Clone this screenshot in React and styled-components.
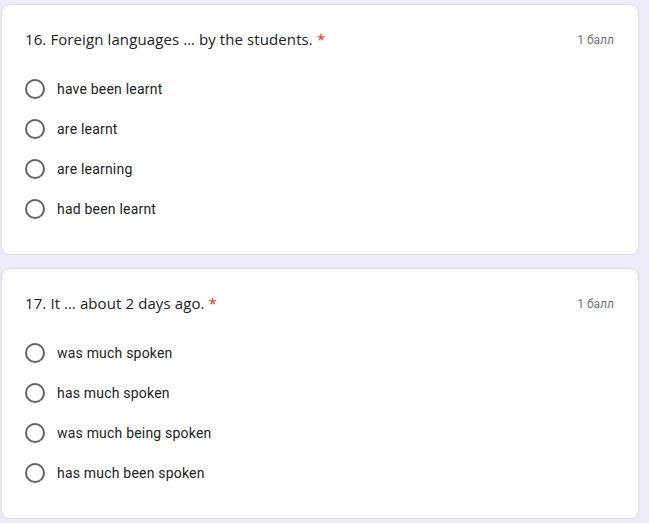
import React from "react";
import styled, { createGlobalStyle } from "styled-components";

const Global = createGlobalStyle`
  html, body { margin: 0; padding: 0; }
  body {
    background: #f0ebf8;
    font-family: Roboto, "Liberation Sans", Arial, sans-serif;
    color: #202124;
  }
`;

const Page = styled.div`
  display: flex;
  flex-direction: column;
  gap: 13px;
  padding: 4px 10px 4px 1px;
  width: 638px;
`;

const Card = styled.div`
  background: #fff;
  border: 1px solid #dadce0;
  border-radius: 8px;
  padding: 22px 24px 25px 23px;
`;

const Header = styled.div`
  display: flex;
  justify-content: space-between;
  align-items: center;
  height: 24px;
  margin-bottom: 18px;
`;

const Title = styled.div`
  font-family: "Open Sans", Roboto, sans-serif;
  font-size: 15px;
  letter-spacing: 0.1px;
  color: #202124;
`;

const Star = styled.span`
  color: #d93025;
  margin-left: 4px;
`;

const Points = styled.div`
  font-size: 12px;
  color: #70757a;
  margin-top: 2px;
`;

const Options = styled.div`
  display: flex;
  flex-direction: column;
`;

const Option = styled.label`
  display: flex;
  align-items: center;
  height: 40px;
  gap: 12px;
  font-size: 14px;
  letter-spacing: 0.2px;
  color: #202124;
`;

const Radio = styled.span`
  width: 16px;
  height: 16px;
  border: 2px solid #5f6368;
  border-radius: 50%;
  flex: none;
`;

const questions = [
  {
    title: "16. Foreign languages … by the students.",
    options: ["have been learnt", "are learnt", "are learning", "had been learnt"],
  },
  {
    title: "17. It … about 2 days ago.",
    options: ["was much spoken", "has much spoken", "was much being spoken", "has much been spoken"],
  },
];

export default function App() {
  return (
    <>
      <Global />
      <Page>
        {questions.map((q) => (
          <Card key={q.title}>
            <Header>
              <Title>
                {q.title}
                <Star>*</Star>
              </Title>
              <Points>1 балл</Points>
            </Header>
            <Options>
              {q.options.map((o) => (
                <Option key={o}>
                  <Radio />
                  {o}
                </Option>
              ))}
            </Options>
          </Card>
        ))}
      </Page>
    </>
  );
}
